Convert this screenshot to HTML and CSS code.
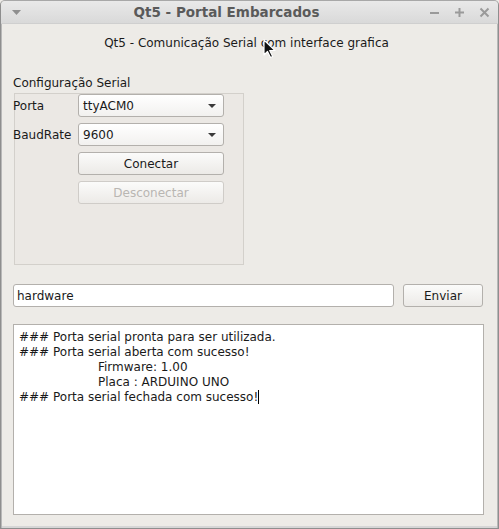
FILE: index.html
```html
<!DOCTYPE html>
<html lang="pt">
<head>
<meta charset="utf-8">
<title>Qt5 - Portal Embarcados</title>
<link rel="stylesheet" href="styles.css">
</head>
<body>
<div class="window">
  <div class="titlebar">
    <span class="menu-btn"><svg width="9" height="6" viewBox="0 0 9 6"><path d="M0 0h9L4.5 5z" fill="#8f8f8f"/></svg></span>
    <span class="title">Qt5 - Portal Embarcados</span>
    <span class="wm-buttons">
      <svg width="11" height="11" viewBox="0 0 11 11"><path d="M1 6h9" stroke="#9a9a9a" stroke-width="2"/></svg>
      <svg width="11" height="11" viewBox="0 0 11 11"><path d="M1 5.5h9M5.5 1v9" stroke="#9a9a9a" stroke-width="2"/></svg>
      <svg width="11" height="11" viewBox="0 0 11 11"><path d="M1.5 1.5l8 8M9.5 1.5l-8 8" stroke="#9a9a9a" stroke-width="2"/></svg>
    </span>
  </div>
  <div class="content">
    <div class="heading">Qt5 - Comunicação Serial com interface grafica</div>

    <div class="group-title">Configuração Serial</div>
    <div class="group">
      <div class="form">
        <label class="lbl">Porta</label>
        <div class="combo"><span>ttyACM0</span><i class="arrow"></i></div>
        <label class="lbl">BaudRate</label>
        <div class="combo"><span>9600</span><i class="arrow"></i></div>
        <span></span>
        <div class="btn">Conectar</div>
        <span></span>
        <div class="btn disabled">Desconectar</div>
      </div>
    </div>

    <div class="send-row">
      <div class="lineedit">hardware</div>
      <div class="btn send">Enviar</div>
    </div>

    <div class="console">
      <div>### Porta serial pronta para ser utilizada.</div>
      <div>### Porta serial aberta com sucesso!</div>
      <div class="indent">Firmware: 1.00</div>
      <div class="indent">Placa : ARDUINO UNO</div>
      <div>### Porta serial fechada com sucesso!<span class="caret"></span></div>
    </div>
  </div>

  <svg class="pointer" width="13" height="20" viewBox="0 0 13 20"><path d="M1 1v15l3.5-3.5 3 6 2.2-1-3-6H12z" fill="#111" stroke="#fff" stroke-width="1.2" stroke-linejoin="round"/></svg>
</div>
</body>
</html>
```
FILE: styles.css
```css
* { box-sizing: border-box; }
html, body { margin: 0; padding: 0; background: #edebe7; }
body {
  font-family: "DejaVu Sans", "Noto Sans", sans-serif;
  font-size: 12px;
  color: #1a1a1a;
}
.window {
  position: relative;
  width: 499px;
  height: 529px;
  border: 1px solid #8e8e8e;
  border-top-color: #a8a8a8;
  border-radius: 5px 5px 0 0;
  background: #edebe7;
  box-shadow: inset 1px 0 0 #b8b8b8, inset -1px 0 0 #b8b8b8, inset 0 -2px 0 #d6d6d6;
  overflow: hidden;
}
.titlebar {
  height: 23px;
  display: flex;
  align-items: center;
  background: linear-gradient(#e9e9e9, #d9d9d9);
  border-bottom: 1px solid #cfcfcf;
  padding: 0 8px 0 11px;
}
.menu-btn { display: flex; width: 30px; padding-top: 1px; }
.title {
  flex: 1;
  text-align: center;
  font-weight: bold;
  font-size: 13.5px;
  color: #5a5a5a;
  padding-right: 18px;
}
.wm-buttons { display: flex; gap: 14px; padding-top: 1px; }
.content {
  padding: 0 14px 0 12px;
}
.heading {
  text-align: center;
  margin-top: 12px;
  height: 15px;
  line-height: 15px;
  padding-right: 4px;
}
.group-title {
  margin-top: 25px;
  height: 15px;
  line-height: 15px;
}
.group {
  margin: 2px 0 0 1px;
  width: 230px;
  height: 172px;
  border: 1px solid #d3d0cb;
  background: #ebe8e4;
}
.form {
  display: grid;
  grid-template-columns: 65px 146px;
  row-gap: 6px;
  margin-left: -2px;
  align-items: center;
}
.lbl { line-height: 22px; }
.combo, .btn, .lineedit {
  height: 23px;
  border: 1px solid #b3b0ac;
  border-radius: 3px;
  display: flex;
  align-items: center;
}
.combo {
  background: linear-gradient(#ffffff, #f2f1ef);
  padding: 0 7px 0 4px;
  justify-content: space-between;
}
.arrow {
  width: 0; height: 0;
  border-left: 4px solid transparent;
  border-right: 4px solid transparent;
  border-top: 4px solid #3a3a3a;
}
.btn {
  justify-content: center;
  background: linear-gradient(#fbfbfa, #eceae7);
}
.btn.disabled {
  color: #b9b6b2;
  border-color: #cfccc8;
}
.send-row {
  display: flex;
  gap: 9px;
  margin-top: 19px;
}
.lineedit {
  width: 381px;
  background: #fff;
  padding-left: 3px;
}
.send { width: 80px; }
.console {
  margin-top: 17px;
  width: 471px;
  height: 191px;
  background: #fff;
  border: 1px solid #b3b0ac;
  padding: 5px 5px;
  line-height: 15px;
}
.indent { padding-left: 79px; }
.caret {
  display: inline-block;
  width: 1px;
  height: 14px;
  background: #000;
  vertical-align: -3px;
}
.pointer {
  position: absolute;
  left: 262px;
  top: 38px;
}
```
